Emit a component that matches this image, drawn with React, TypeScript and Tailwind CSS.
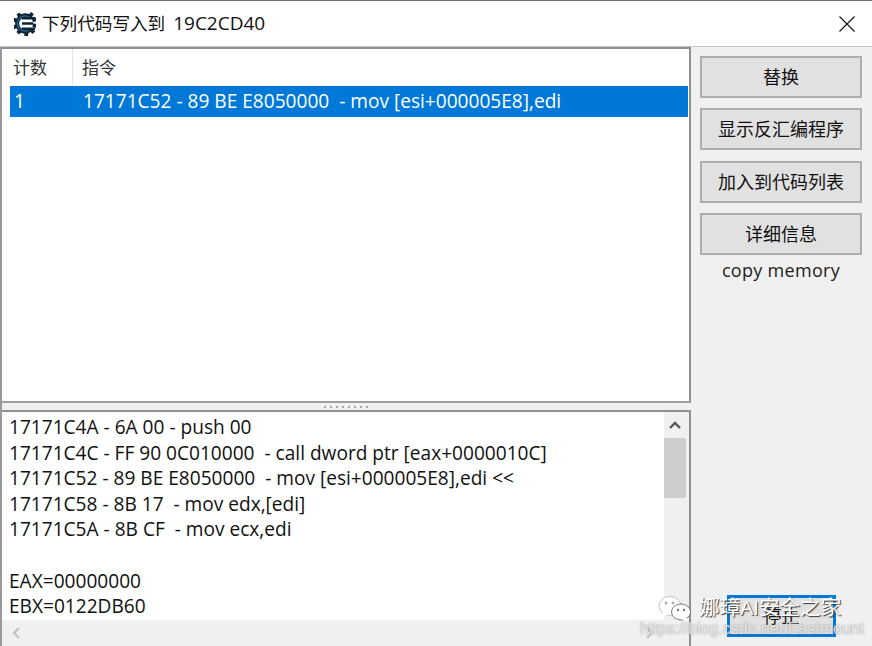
const font = { fontFamily: '"Open Sans", "Noto Sans CJK SC", sans-serif' };

function Btn({ label, extra = "" }: { label: string; extra?: string }) {
  return (
    <div className={`flex h-[42px] w-[162px] items-center justify-center border-2 border-[#adadad] bg-[#e1e1e1] text-[18px] text-[#111] ${extra}`}>
      {label}
    </div>
  );
}

function Logo() {
  const teeth = [-140, -105, -70, -35, 35, 70, 105, 140, 178];
  return (
    <svg width="22" height="25" viewBox="0 0 22 25" className="shrink-0">
      {teeth.map((a) => (
        <rect key={a} x="9.2" y="0" width="3.8" height="5" fill="#0c2436" transform={`rotate(${a} 11.5 12.5)`} />
      ))}
      <path d="M17 6.6A8.2 8.2 0 1 0 17 18.4" fill="none" stroke="#0c2436" strokeWidth="4" />
      <path d="M16.4 7.2A7.6 7.6 0 1 0 16.4 17.8" fill="none" stroke="#2a6a94" strokeWidth="1.3" />
      <path d="M8 6h13v2.6H8zM8 11.2h11v2.6H8zM8 16.4h13V19H8z" fill="#0c2436" />
    </svg>
  );
}

const lines = [
  "17171C4A - 6A 00 - push 00",
  "17171C4C - FF 90 0C010000  - call dword ptr [eax+0000010C]",
  "17171C52 - 89 BE E8050000  - mov [esi+000005E8],edi <<",
  "17171C58 - 8B 17  - mov edx,[edi]",
  "17171C5A - 8B CF  - mov ecx,edi",
  "\u00a0",
  "EAX=00000000",
  "EBX=0122DB60",
];

export default function App() {
  return (
    <div style={font} className="relative flex h-[646px] w-[872px] flex-col overflow-hidden border-t border-t-[#6f6f6f] bg-[#f0f0f0] text-[#111]">
      {/* Title bar */}
      <div className="flex h-[46px] shrink-0 items-center border-b border-[#c4c4c4] bg-white pl-[14px] pr-[16px]">
        <Logo />
        <span className="ml-[6px] text-[17.6px] text-[#111]">下列代码写入到</span>
        <span className="ml-[8px] text-[19px] text-[#111]">19C2CD40</span>
        <svg width="16" height="16" viewBox="0 0 16 16" className="ml-auto mr-[1px]">
          <path d="M0.5 0.5L15.5 15.5M15.5 0.5L0.5 15.5" stroke="#111" strokeWidth="1.1" />
        </svg>
      </div>

      <div className="flex min-h-0 flex-1 border-l-2 border-l-[#9a9a9a]">
        {/* Left column */}
        <div className="flex w-[689px] shrink-0 flex-col">
          {/* Table */}
          <div className="flex h-[356px] shrink-0 flex-col border-2 border-l-0 border-[#8f8f8f] border-b-[#a0a0a0] bg-white pl-[8px]">
            <div className="flex h-[37px] shrink-0 items-center text-[17px] text-[#333]">
              <div className="flex h-full w-[63px] items-center border-r border-[#e5e5e5] pl-[3px]">计数</div>
              <div className="pl-[9px]">指令</div>
            </div>
            <div className="mr-[1px] flex h-[31px] items-center bg-[#0078d7] text-[19.1px] text-white">
              <span className="w-[73px] pl-[4px]">1</span>
              <span className="whitespace-pre">17171C52 - 89 BE E8050000  - mov [esi+000005E8],edi</span>
            </div>
          </div>
          {/* Splitter */}
          <div className="flex h-[7px] shrink-0 items-center justify-center">
            <div className="h-[2px] w-[46px] bg-[repeating-linear-gradient(90deg,#a8a8a8_0_2px,transparent_2px_6px)]" />
          </div>
          {/* Code panel */}
          <div className="flex min-h-0 flex-1 flex-col border-2 border-b-0 border-l-0 border-[#8f8f8f] bg-white">
            <div className="flex min-h-0 flex-1">
              <div className="min-w-0 flex-1 overflow-hidden pl-[7px] pt-[3px] text-[19.1px] leading-[25.6px] text-[#111]">
                {lines.map((l, i) => (
                  <div key={i} className="whitespace-pre">{l}</div>
                ))}
              </div>
              <div className="flex w-[25px] shrink-0 flex-col bg-[#f0f0f0]">
                <div className="flex h-[26px] w-[22px] items-center justify-center">
                  <svg width="12" height="8" viewBox="0 0 12 8">
                    <path d="M1 7L6 2L11 7" fill="none" stroke="#555" strokeWidth="2.4" />
                  </svg>
                </div>
                <div className="h-[60px] w-[22px] bg-[#cdcdcd]" />
              </div>
            </div>
            <div className="flex h-[26px] shrink-0 items-center justify-between bg-[#f0f0f0] pl-[9px] pr-[34px]">
              <svg width="10" height="12" viewBox="0 0 10 12">
                <path d="M8 1L3 6L8 11" fill="none" stroke="#c4c4c4" strokeWidth="2.4" />
              </svg>
              <svg width="10" height="12" viewBox="0 0 10 12">
                <path d="M2 1L7 6L2 11" fill="none" stroke="#c4c4c4" strokeWidth="2.4" />
              </svg>
            </div>
          </div>
        </div>

        {/* Right column */}
        <div className="flex min-w-0 flex-1 flex-col items-start border-l-2 border-l-transparent pl-[7px] pt-[9px]">
          <div className="flex flex-col gap-[10px]">
            <Btn label="替换" />
            <Btn label="显示反汇编程序" />
            <Btn label="加入到代码列表" extra="mt-[1px]" />
            <Btn label="详细信息" />
          </div>
          <div className="w-[162px] pt-[3px] text-center text-[18px] leading-[24px] tracking-[0.3px] text-[#222]">copy memory</div>
          <div className="ml-[27px] mt-auto mb-[9px] flex h-[42px] w-[109px] items-center justify-center border-[3px] border-[#0078d7] bg-[#e1e1e1] text-[18px] text-[#111]">
            停止
          </div>
        </div>
      </div>

      {/* Watermark */}
      <div className="pointer-events-none absolute left-[658px] top-[594px]">
        <svg width="34" height="28" viewBox="0 0 34 28">
          <ellipse cx="12" cy="11" rx="11" ry="9.5" fill="#fff" stroke="#8a8a8a" strokeWidth="0.5" />
          <path d="M5 17L4 24L10 19z" fill="#fff" />
          <ellipse cx="23" cy="17" rx="9.5" ry="8" fill="#fff" stroke="#6a6a6a" strokeWidth="0.9" />
          <path d="M28 22L31 28L24 24z" fill="#fff" />
          <circle cx="8" cy="8" r="1.4" fill="#aaa" />
          <circle cx="15" cy="8" r="1.4" fill="#aaa" />
          <circle cx="20" cy="15" r="1.2" fill="#777" />
          <circle cx="26" cy="15" r="1.2" fill="#777" />
        </svg>
      </div>
      <div className="pointer-events-none absolute left-[699px] top-[592px] text-[20.6px] leading-[28px] text-white [text-shadow:1px_1px_1px_#333]">
        娜璋AI安全之家
      </div>
      <div style={{ fontFamily: '"Liberation Sans", sans-serif' }} className="pointer-events-none absolute left-[640px] top-[618px] text-[16px] leading-[20px] text-white/70 [text-shadow:0_0_2px_#888]">
        https://blog.csdn.net/Eastmount
      </div>
    </div>
  );
}
